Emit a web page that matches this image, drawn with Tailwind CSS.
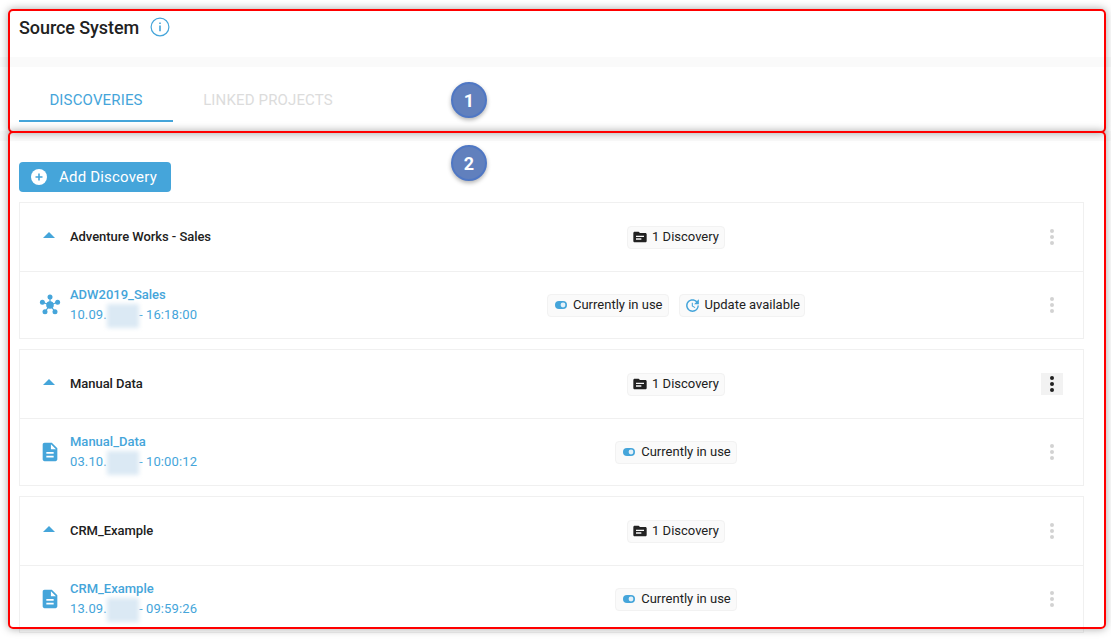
<!DOCTYPE html>
<html lang="en">
  <head>
    <meta charset="UTF-8" />
    <meta name="viewport" content="width=device-width, initial-scale=1.0" />
    <title>Source System</title>
    <script src="https://cdn.jsdelivr.net/npm/@tailwindcss/browser@4"></script>
  </head>
  <body class="bg-white font-['Roboto',sans-serif] text-[#212121]">
    <div class="relative w-[1111px] h-[643px] overflow-hidden">
      <!-- Title -->
      <header class="h-[57px] pl-[19px] pt-[17px] flex items-start gap-[11px]">
        <h1 class="text-[18px] leading-[22px] font-medium tracking-[-0.08px]">Source System</h1>
        <svg class="w-5 h-5 text-[#45a5da]" viewBox="0 0 20 20" fill="none" stroke="currentColor">
          <circle cx="10" cy="10" r="8.9" stroke-width="1.2" />
          <path d="M10 8.6v5.6M10 5.4v1.6" stroke-width="1.6" />
        </svg>
      </header>
      <div class="h-[10px] bg-[#fafafa]"></div>

      <!-- Tabs -->
      <nav class="h-[55px] px-[19px] flex text-[15px] tracking-[0.15px]">
        <a class="w-[154px] flex items-center justify-center pt-[13px] border-b-2 border-[#45a5da] text-[#45a5da]">DISCOVERIES</a>
        <a class="w-[190px] flex items-center justify-center pt-[11px] text-[#dcdcdc]">LINKED PROJECTS</a>
      </nav>
      <div class="h-[9px]"></div>
      <div class="h-[10px] bg-[#fafafa]"></div>

      <!-- Discoveries -->
      <main class="pl-[19px] pr-[27px] pt-[21px]">
        <button class="w-[152px] h-[30px] flex items-center gap-[12px] pl-3 rounded bg-[#45a5da] text-white text-[15px] tracking-[0.2px]">
          <svg class="w-4 h-4" viewBox="0 0 16 16">
            <circle cx="8" cy="8" r="8" fill="#fff" />
            <path d="M8 4.5v7M4.5 8h7" stroke="#45a5da" stroke-width="1.6" />
          </svg>
          Add Discovery
        </button>

        <div class="mt-[10px] flex flex-col gap-[10px]">
          <!-- Adventure Works -->
          <section class="h-[137px] border border-[#f0f0f0]">
            <div class="h-[69px] flex items-center border-b border-[#f0f0f0]">
              <div class="w-[50px] flex justify-center pl-[8px] -mt-1">
                <svg class="w-3 h-[6px] text-[#45a5da]" viewBox="0 0 12 6" fill="currentColor"><path d="M6 0l6 6H0z" /></svg>
              </div>
              <div class="w-[252px] text-[13px] font-medium tracking-[-0.05px]">Adventure Works - Sales</div>
              <div class="w-[708px] flex justify-center gap-[10px]">
                <span class="h-[23px] pl-[4px] pr-[5px] flex items-center gap-[4px] bg-[#fafafa] border border-[#f2f2f2] rounded-sm text-[13px]">
                  <svg class="w-[16px] h-[16px] text-[#212121]" viewBox="0 0 24 24" fill="currentColor"><path d="M20 6h-8l-2-2H4c-1.1 0-1.99.9-1.99 2L2 18c0 1.1.9 2 2 2h16c1.1 0 2-.9 2-2V8c0-1.1-.9-2-2-2zm-6 10H6v-2h8v2zm4-4H6v-2h12v2z" /></svg>
                  1 Discovery
                </span>
              </div>
              <div class="flex-1 flex justify-center pr-[10px]">
                <span class="w-[22px] h-[22px] flex flex-col items-center justify-center gap-[2px]">
                  <i class="w-1 h-1 rounded-full bg-[#d2d2d2]"></i>
                  <i class="w-1 h-1 rounded-full bg-[#d2d2d2]"></i>
                  <i class="w-1 h-1 rounded-full bg-[#d2d2d2]"></i>
                </span>
              </div>
            </div>
            <div class="h-[66px] flex items-center">
              <div class="w-[50px] flex justify-center pl-[10px]">
                <svg class="w-5 h-5 overflow-visible text-[#45a5da]" viewBox="0 0 20 20" fill="currentColor" stroke="currentColor">
                  <path d="M10 10L10 2M10 10L2.4 7.3M10 10L17.6 7.3M10 10L5 16.7M10 10L15 16.7" stroke-width="1.2" />
                  <circle cx="10" cy="10" r="3.8" stroke="none" />
                  <circle cx="10" cy="2" r="2.5" stroke="none" />
                  <circle cx="2.4" cy="7.3" r="2.5" stroke="none" />
                  <circle cx="17.6" cy="7.3" r="2.5" stroke="none" />
                  <circle cx="5" cy="16.7" r="2.5" stroke="none" />
                  <circle cx="15" cy="16.7" r="2.5" stroke="none" />
                </svg>
              </div>
              <div class="w-[252px] text-[13px] leading-[20px] text-[#45a5da]">
                <div class="font-medium">ADW2019_Sales</div>
                <div class="tracking-[0.13px]">10.09.<span class="inline-block w-[32px] h-[24px] -my-2 align-middle bg-[#dbe9f4] blur-[2px]"></span>- 16:18:00</div>
              </div>
              <div class="w-[708px] flex justify-center gap-[10px]">
                <span class="h-[23px] pl-[7px] pr-[5px] flex items-center gap-[6px] bg-[#fafafa] border border-[#f2f2f2] rounded-sm text-[13px]">
                  <svg class="w-[12px] h-[8px]" viewBox="0 0 12 8"><rect width="12" height="8" rx="4" fill="#45a5da" /><circle cx="8" cy="4" r="2.4" fill="#e3f1f9" /></svg>
                  Currently in use
                </span>
                <span class="h-[23px] pl-[4px] pr-[4px] flex items-center gap-[4px] bg-[#fafafa] border border-[#f2f2f2] rounded-sm text-[13px]">
                  <svg class="w-[17px] h-[17px] text-[#45a5da]" viewBox="0 0 24 24" fill="currentColor"><path d="M21 10.12h-6.78l2.74-2.82c-2.73-2.7-7.15-2.8-9.88-.1-2.73 2.71-2.73 7.08 0 9.79s7.15 2.71 9.88 0C18.32 15.65 19 14.08 19 12.1h2c0 1.98-.88 4.55-2.64 6.29-3.51 3.48-9.21 3.48-12.72 0-3.5-3.47-3.53-9.11-.02-12.58s9.14-3.47 12.65 0L21 3v7.12zM12.5 8v4.25l3.5 2.08-.72 1.21L11 13V8h1.5z" /></svg>
                  Update available
                </span>
              </div>
              <div class="flex-1 flex justify-center pr-[10px]">
                <span class="w-[22px] h-[22px] flex flex-col items-center justify-center gap-[2px]">
                  <i class="w-1 h-1 rounded-full bg-[#d2d2d2]"></i>
                  <i class="w-1 h-1 rounded-full bg-[#d2d2d2]"></i>
                  <i class="w-1 h-1 rounded-full bg-[#d2d2d2]"></i>
                </span>
              </div>
            </div>
          </section>

          <!-- Manual Data -->
          <section class="h-[137px] border border-[#f0f0f0]">
            <div class="h-[69px] flex items-center border-b border-[#f0f0f0]">
              <div class="w-[50px] flex justify-center pl-[8px] -mt-1">
                <svg class="w-3 h-[6px] text-[#45a5da]" viewBox="0 0 12 6" fill="currentColor"><path d="M6 0l6 6H0z" /></svg>
              </div>
              <div class="w-[252px] text-[13px] font-medium tracking-[-0.05px]">Manual Data</div>
              <div class="w-[708px] flex justify-center gap-[10px]">
                <span class="h-[23px] pl-[4px] pr-[5px] flex items-center gap-[4px] bg-[#fafafa] border border-[#f2f2f2] rounded-sm text-[13px]">
                  <svg class="w-[16px] h-[16px] text-[#212121]" viewBox="0 0 24 24" fill="currentColor"><path d="M20 6h-8l-2-2H4c-1.1 0-1.99.9-1.99 2L2 18c0 1.1.9 2 2 2h16c1.1 0 2-.9 2-2V8c0-1.1-.9-2-2-2zm-6 10H6v-2h8v2zm4-4H6v-2h12v2z" /></svg>
                  1 Discovery
                </span>
              </div>
              <div class="flex-1 flex justify-center pr-[10px]">
                <span class="w-[22px] h-[22px] bg-[#f2f2f2] flex flex-col items-center justify-center gap-[2px]">
                  <i class="w-1 h-1 rounded-full bg-[#212121]"></i>
                  <i class="w-1 h-1 rounded-full bg-[#212121]"></i>
                  <i class="w-1 h-1 rounded-full bg-[#212121]"></i>
                </span>
              </div>
            </div>
            <div class="h-[66px] flex items-center">
              <div class="w-[50px] flex justify-center pl-[10px]">
                <svg class="w-[22px] h-[22px] text-[#45a5da]" viewBox="0 0 24 24" fill="currentColor"><path d="M14 2H6c-1.1 0-1.99.9-1.99 2L4 20c0 1.1.89 2 1.99 2H18c1.1 0 2-.9 2-2V8l-6-6zm2 16H8v-2h8v2zm0-4H8v-2h8v2zm-3-5V3.5L18.5 9H13z" /></svg>
              </div>
              <div class="w-[252px] text-[13px] leading-[20px] text-[#45a5da]">
                <div class="font-medium">Manual_Data</div>
                <div class="tracking-[0.13px]">03.10.<span class="inline-block w-[32px] h-[24px] -my-2 align-middle bg-[#dbe9f4] blur-[2px]"></span>- 10:00:12</div>
              </div>
              <div class="w-[708px] flex justify-center gap-[10px]">
                <span class="h-[23px] pl-[7px] pr-[5px] flex items-center gap-[6px] bg-[#fafafa] border border-[#f2f2f2] rounded-sm text-[13px]">
                  <svg class="w-[12px] h-[8px]" viewBox="0 0 12 8"><rect width="12" height="8" rx="4" fill="#45a5da" /><circle cx="8" cy="4" r="2.4" fill="#e3f1f9" /></svg>
                  Currently in use
                </span>
              </div>
              <div class="flex-1 flex justify-center pr-[10px]">
                <span class="w-[22px] h-[22px] flex flex-col items-center justify-center gap-[2px]">
                  <i class="w-1 h-1 rounded-full bg-[#d2d2d2]"></i>
                  <i class="w-1 h-1 rounded-full bg-[#d2d2d2]"></i>
                  <i class="w-1 h-1 rounded-full bg-[#d2d2d2]"></i>
                </span>
              </div>
            </div>
          </section>

          <!-- CRM -->
          <section class="h-[137px] border border-[#f0f0f0]">
            <div class="h-[69px] flex items-center border-b border-[#f0f0f0]">
              <div class="w-[50px] flex justify-center pl-[8px] -mt-1">
                <svg class="w-3 h-[6px] text-[#45a5da]" viewBox="0 0 12 6" fill="currentColor"><path d="M6 0l6 6H0z" /></svg>
              </div>
              <div class="w-[252px] text-[13px] font-medium tracking-[-0.05px]">CRM_Example</div>
              <div class="w-[708px] flex justify-center gap-[10px]">
                <span class="h-[23px] pl-[4px] pr-[5px] flex items-center gap-[4px] bg-[#fafafa] border border-[#f2f2f2] rounded-sm text-[13px]">
                  <svg class="w-[16px] h-[16px] text-[#212121]" viewBox="0 0 24 24" fill="currentColor"><path d="M20 6h-8l-2-2H4c-1.1 0-1.99.9-1.99 2L2 18c0 1.1.9 2 2 2h16c1.1 0 2-.9 2-2V8c0-1.1-.9-2-2-2zm-6 10H6v-2h8v2zm4-4H6v-2h12v2z" /></svg>
                  1 Discovery
                </span>
              </div>
              <div class="flex-1 flex justify-center pr-[10px]">
                <span class="w-[22px] h-[22px] flex flex-col items-center justify-center gap-[2px]">
                  <i class="w-1 h-1 rounded-full bg-[#d2d2d2]"></i>
                  <i class="w-1 h-1 rounded-full bg-[#d2d2d2]"></i>
                  <i class="w-1 h-1 rounded-full bg-[#d2d2d2]"></i>
                </span>
              </div>
            </div>
            <div class="h-[66px] flex items-center">
              <div class="w-[50px] flex justify-center pl-[10px]">
                <svg class="w-[22px] h-[22px] text-[#45a5da]" viewBox="0 0 24 24" fill="currentColor"><path d="M14 2H6c-1.1 0-1.99.9-1.99 2L4 20c0 1.1.89 2 1.99 2H18c1.1 0 2-.9 2-2V8l-6-6zm2 16H8v-2h8v2zm0-4H8v-2h8v2zm-3-5V3.5L18.5 9H13z" /></svg>
              </div>
              <div class="w-[252px] text-[13px] leading-[20px] text-[#45a5da]">
                <div class="font-medium">CRM_Example</div>
                <div class="tracking-[0.13px]">13.09.<span class="inline-block w-[32px] h-[24px] -my-2 align-middle bg-[#dbe9f4] blur-[2px]"></span>- 09:59:26</div>
              </div>
              <div class="w-[708px] flex justify-center gap-[10px]">
                <span class="h-[23px] pl-[7px] pr-[5px] flex items-center gap-[6px] bg-[#fafafa] border border-[#f2f2f2] rounded-sm text-[13px]">
                  <svg class="w-[12px] h-[8px]" viewBox="0 0 12 8"><rect width="12" height="8" rx="4" fill="#45a5da" /><circle cx="8" cy="4" r="2.4" fill="#e3f1f9" /></svg>
                  Currently in use
                </span>
              </div>
              <div class="flex-1 flex justify-center pr-[10px]">
                <span class="w-[22px] h-[22px] flex flex-col items-center justify-center gap-[2px]">
                  <i class="w-1 h-1 rounded-full bg-[#d2d2d2]"></i>
                  <i class="w-1 h-1 rounded-full bg-[#d2d2d2]"></i>
                  <i class="w-1 h-1 rounded-full bg-[#d2d2d2]"></i>
                </span>
              </div>
            </div>
          </section>
        </div>
      </main>

      <!-- Annotations drawn over the page -->
      <div class="absolute left-[8px] top-[9px] w-[1098px] h-[124px] border-2 border-[#ff0000] rounded-[5px] shadow-[0_0_8px_rgba(0,0,0,0.35)]"></div>
      <div class="absolute left-[8px] top-[131px] w-[1098px] h-[498px] border-2 border-[#ff0000] rounded-[5px] shadow-[0_0_8px_rgba(0,0,0,0.35)]"></div>
      <div class="absolute left-[451px] top-[82px] w-9 h-9 rounded-full bg-[#6180bd] border-2 border-[#4f77c4] shadow-[0_2px_4px_rgba(0,0,0,0.3)] flex items-center justify-center text-white text-[18px] font-bold">1</div>
      <div class="absolute left-[451px] top-[145px] w-9 h-9 rounded-full bg-[#6180bd] border-2 border-[#4f77c4] shadow-[0_2px_4px_rgba(0,0,0,0.3)] flex items-center justify-center text-white text-[18px] font-bold">2</div>
    </div>
  </body>
</html>
